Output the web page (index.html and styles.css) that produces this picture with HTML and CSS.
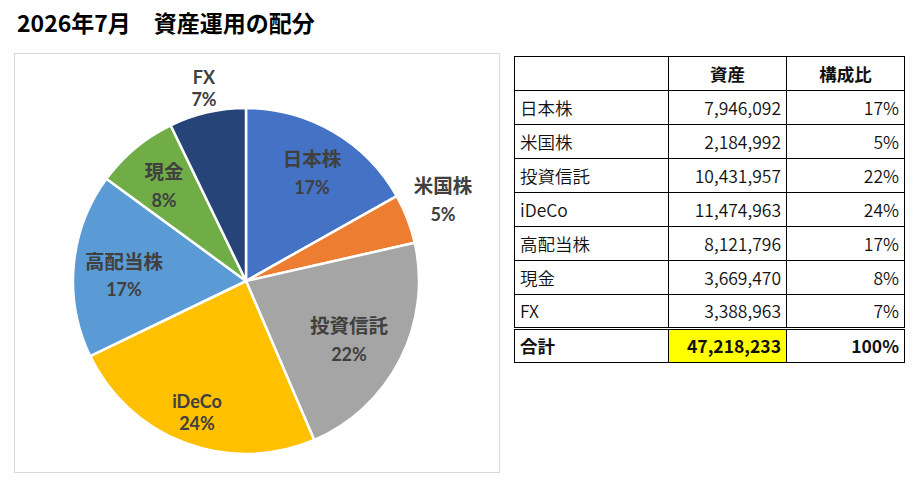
FILE: index.html
```html
<!DOCTYPE html>
<html lang="ja">
<head>
<meta charset="utf-8">
<title>2026年7月 資産運用の配分</title>
<link rel="stylesheet" href="styles.css">
</head>
<body>
<div class="page">
  <h1 class="title">2026年7月　資産運用の配分</h1>
  <div class="content">
    <div class="chart">
      <svg class="pie" viewBox="15 54 484 418" width="484" height="418">
        <g class="slices">
          <path fill="#4472C4" d="M246 281 L246 108 A173 173 0 0 1 396.70 196.04 Z"/>
          <path fill="#ED7D31" d="M246 281 L396.70 196.04 A173 173 0 0 1 414.73 242.79 Z"/>
          <path fill="#A5A5A5" d="M246 281 L414.73 242.79 A173 173 0 0 1 314.21 439.99 Z"/>
          <path fill="#FFC000" d="M246 281 L314.21 439.99 A173 173 0 0 1 90.15 356.10 Z"/>
          <path fill="#5B9BD5" d="M246 281 L90.15 356.10 A173 173 0 0 1 106.38 178.85 Z"/>
          <path fill="#70AD47" d="M246 281 L106.38 178.85 A173 173 0 0 1 170.62 125.28 Z"/>
          <path fill="#264478" d="M246 281 L170.62 125.28 A173 173 0 0 1 246 108 Z"/>
        </g>
        <g class="labels">
          <text x="204" y="77">FX</text>
          <text x="204" y="99">7%</text>
          <text class="jp" x="312" y="158">日本株</text>
          <text x="312" y="187">17%</text>
          <text class="jp" x="443" y="185">米国株</text>
          <text x="443" y="214">5%</text>
          <text class="jp" x="164" y="171">現金</text>
          <text x="164" y="200">8%</text>
          <text class="jp" x="124" y="261">高配当株</text>
          <text x="124" y="289">17%</text>
          <text class="jp" x="349" y="325">投資信託</text>
          <text x="349" y="354">22%</text>
          <text x="197" y="401">iDeCo</text>
          <text x="197" y="423">24%</text>
        </g>
      </svg>
    </div>
    <table class="assets">
      <colgroup>
        <col class="c-name">
        <col class="c-val">
        <col class="c-pct">
      </colgroup>
      <thead>
        <tr><th></th><th>資産</th><th>構成比</th></tr>
      </thead>
      <tbody>
        <tr><td class="name">日本株</td><td class="num">7,946,092</td><td class="num">17%</td></tr>
        <tr><td class="name">米国株</td><td class="num">2,184,992</td><td class="num">5%</td></tr>
        <tr><td class="name">投資信託</td><td class="num">10,431,957</td><td class="num">22%</td></tr>
        <tr><td class="name">iDeCo</td><td class="num">11,474,963</td><td class="num">24%</td></tr>
        <tr><td class="name">高配当株</td><td class="num">8,121,796</td><td class="num">17%</td></tr>
        <tr><td class="name">現金</td><td class="num">3,669,470</td><td class="num">8%</td></tr>
        <tr><td class="name">FX</td><td class="num">3,388,963</td><td class="num">7%</td></tr>
        <tr class="total"><td class="name">合計</td><td class="num hl">47,218,233</td><td class="num">100%</td></tr>
      </tbody>
    </table>
  </div>
</div>
</body>
</html>
```
FILE: styles.css
```css
html, body {
  margin: 0;
  padding: 0;
  background: #fff;
}

body {
  font-family: "Noto Sans CJK JP", "Noto Sans", sans-serif;
  color: #000;
}

.page {
  padding: 7px 0 0 14px;
}

.title {
  margin: 0 0 0 3px;
  font-size: 23px;
  line-height: 30px;
  font-weight: 700;
  color: #000;
}

.content {
  display: flex;
  align-items: flex-start;
  gap: 14px;
  margin-top: 16px;
}

.chart {
  width: 486px;
  height: 420px;
  box-sizing: border-box;
  border: 1px solid #d9d9d9;
  background: #fff;
}

.pie {
  display: block;
}

.slices path {
  stroke: #fff;
  stroke-width: 2.5;
  stroke-linejoin: round;
}

.labels text {
  font-family: Lato, "Noto Sans CJK JP", sans-serif;
  font-weight: 700;
  font-size: 18px;
  fill: #404040;
  text-anchor: middle;
  dominant-baseline: central;
}

.labels text.jp {
  font-size: 19.5px;
}

.assets {
  margin-top: 3px;
  border-collapse: collapse;
  table-layout: fixed;
  width: 391px;
  font-size: 17.5px;
  color: #111;
}

.c-name { width: 154px; }
.c-val { width: 118px; }
.c-pct { width: 118px; }

.assets th,
.assets td {
  border: 1px solid #000;
  height: 34px;
  padding: 0 5px;
  box-sizing: border-box;
  white-space: nowrap;
  line-height: 20px;
  font-weight: 350;
}

.assets th {
  font-weight: 700;
  text-align: center;
}

.assets td.name {
  text-align: left;
  padding-left: 5px;
}

.assets td.num {
  text-align: right;
}

.assets tr.total td {
  border-top: 3px double #000;
  font-weight: 700;
}

.assets td.hl {
  background: #ffff00;
}
```
